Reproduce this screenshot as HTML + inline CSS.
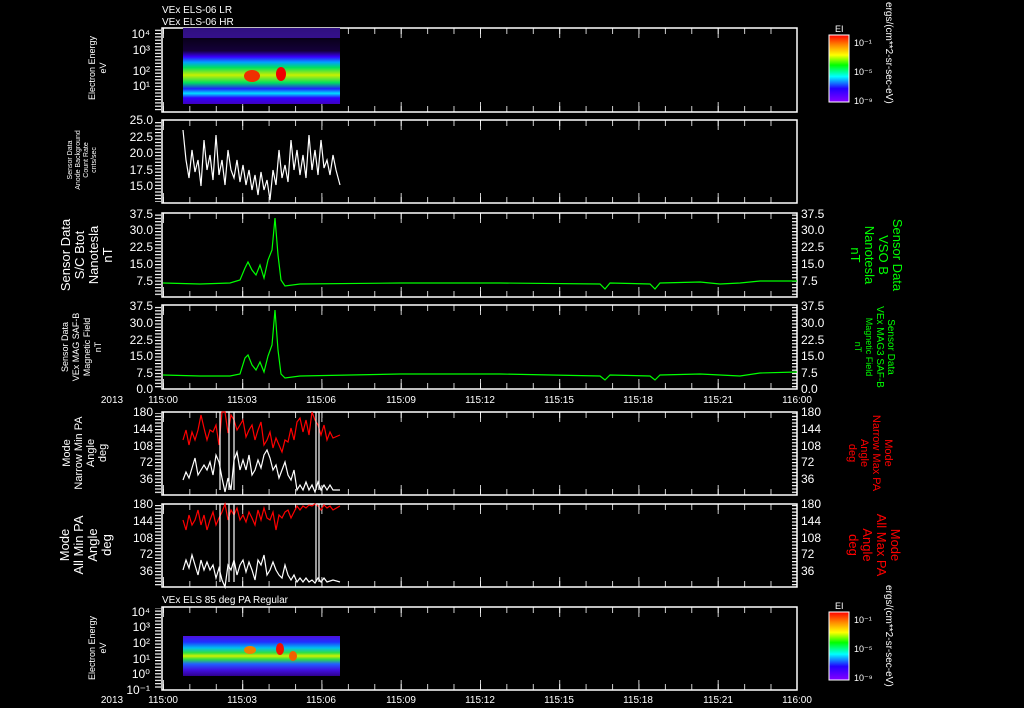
<!DOCTYPE html>
<html><head><style>
body{margin:0;background:#000;width:1024px;height:708px;overflow:hidden}
svg{display:block}
text{font-family:"Liberation Sans",sans-serif;fill:#fff}
.t{font-size:12px}
.s{font-size:9px}
</style></head><body>
<svg width="1024" height="708" viewBox="0 0 1024 708" xmlns="http://www.w3.org/2000/svg">
<defs>
<linearGradient id="sp" x1="0" y1="0" x2="0" y2="1">
<stop offset="0" stop-color="#000"/><stop offset="0.3" stop-color="#14003a"/>
<stop offset="0.38" stop-color="#3a00ff"/><stop offset="0.45" stop-color="#00a0ff"/>
<stop offset="0.52" stop-color="#00e060"/><stop offset="0.62" stop-color="#c8f000"/>
<stop offset="0.72" stop-color="#00e060"/><stop offset="0.8" stop-color="#2020ff"/>
<stop offset="0.86" stop-color="#00e0ff"/><stop offset="0.92" stop-color="#3000ff"/>
<stop offset="1" stop-color="#4000c0"/></linearGradient>
<linearGradient id="sp2" x1="0" y1="0" x2="0" y2="1">
<stop offset="0" stop-color="#5010e0"/><stop offset="0.15" stop-color="#2030ff"/>
<stop offset="0.3" stop-color="#00c0f0"/><stop offset="0.42" stop-color="#30e040"/>
<stop offset="0.5" stop-color="#d0f000"/><stop offset="0.58" stop-color="#30e040"/>
<stop offset="0.7" stop-color="#2060ff"/><stop offset="0.85" stop-color="#4010e0"/>
<stop offset="1" stop-color="#300090"/></linearGradient>
<linearGradient id="cb" x1="0" y1="0" x2="0" y2="1">
<stop offset="0" stop-color="#f00"/><stop offset="0.15" stop-color="#f80"/>
<stop offset="0.3" stop-color="#ff0"/><stop offset="0.45" stop-color="#0f0"/>
<stop offset="0.62" stop-color="#0ff"/><stop offset="0.8" stop-color="#20f"/>
<stop offset="1" stop-color="#80f"/></linearGradient>
<pattern id="hy" patternUnits="userSpaceOnUse" width="10" height="3.3"><rect x="0" y="0" width="10" height="1.2" fill="#fff"/></pattern>
<pattern id="mt" patternUnits="userSpaceOnUse" x="163" y="0" width="26.417" height="10"><rect x="-0.7" y="0" width="1.5" height="10" fill="#fff"/></pattern>
<pattern id="Mt" patternUnits="userSpaceOnUse" x="163" y="0" width="79.25" height="10"><rect x="-0.7" y="0" width="1.5" height="10" fill="#fff"/></pattern>
</defs>
<g fill="none" stroke="#fff" stroke-width="1.5">
<rect x="162" y="28" width="635" height="84"/>
<rect x="162" y="120" width="635" height="83"/>
<rect x="162" y="213" width="635" height="84"/>
<rect x="162" y="305" width="635" height="84"/>
<rect x="162" y="412" width="635" height="83"/>
<rect x="162" y="504" width="635" height="83"/>
<rect x="162" y="607" width="635" height="83"/>
</g>
<g>
<rect x="163" y="28" width="634" height="6" fill="url(#mt)"/><rect x="163" y="28" width="634" height="10" fill="url(#Mt)"/>
<rect x="163" y="106" width="634" height="6" fill="url(#mt)"/><rect x="163" y="102" width="634" height="10" fill="url(#Mt)"/>
<rect x="163" y="120" width="634" height="6" fill="url(#mt)"/><rect x="163" y="120" width="634" height="10" fill="url(#Mt)"/>
<rect x="163" y="197" width="634" height="6" fill="url(#mt)"/><rect x="163" y="193" width="634" height="10" fill="url(#Mt)"/>
<rect x="163" y="213" width="634" height="6" fill="url(#mt)"/><rect x="163" y="213" width="634" height="10" fill="url(#Mt)"/>
<rect x="163" y="291" width="634" height="6" fill="url(#mt)"/><rect x="163" y="287" width="634" height="10" fill="url(#Mt)"/>
<rect x="163" y="305" width="634" height="6" fill="url(#mt)"/><rect x="163" y="305" width="634" height="10" fill="url(#Mt)"/>
<rect x="163" y="383" width="634" height="6" fill="url(#mt)"/><rect x="163" y="379" width="634" height="10" fill="url(#Mt)"/>
<rect x="163" y="412" width="634" height="6" fill="url(#mt)"/><rect x="163" y="412" width="634" height="10" fill="url(#Mt)"/>
<rect x="163" y="489" width="634" height="6" fill="url(#mt)"/><rect x="163" y="485" width="634" height="10" fill="url(#Mt)"/>
<rect x="163" y="504" width="634" height="6" fill="url(#mt)"/><rect x="163" y="504" width="634" height="10" fill="url(#Mt)"/>
<rect x="163" y="581" width="634" height="6" fill="url(#mt)"/><rect x="163" y="577" width="634" height="10" fill="url(#Mt)"/>
<rect x="163" y="607" width="634" height="6" fill="url(#mt)"/><rect x="163" y="607" width="634" height="10" fill="url(#Mt)"/>
<rect x="163" y="684" width="634" height="6" fill="url(#mt)"/><rect x="163" y="680" width="634" height="10" fill="url(#Mt)"/>
</g>
<g fill="url(#hy)">
<rect x="155" y="29" width="6" height="82"/>
<rect x="155" y="121" width="6" height="81"/>
<rect x="155" y="214" width="6" height="82"/>
<rect x="155" y="306" width="6" height="82"/>
<rect x="155" y="413" width="6" height="81"/>
<rect x="155" y="505" width="6" height="81"/>
<rect x="155" y="608" width="6" height="81"/>
<rect x="792" y="214" width="5" height="82"/>
<rect x="792" y="306" width="5" height="82"/>
<rect x="792" y="413" width="5" height="81"/>
<rect x="792" y="505" width="5" height="81"/>
</g>
<rect x="183" y="28" width="157" height="76" fill="url(#sp)"/>
<rect x="183" y="28" width="157" height="10" fill="#6020ff" opacity="0.5"/>
<ellipse cx="252" cy="76" rx="8" ry="6" fill="#f03000"/>
<ellipse cx="281" cy="74" rx="5" ry="7" fill="#f00000"/>
<rect x="183" y="636" width="157" height="40" fill="url(#sp2)"/>
<ellipse cx="250" cy="650" rx="6" ry="4" fill="#f08000"/>
<ellipse cx="280" cy="649" rx="4" ry="6" fill="#f01000"/>
<ellipse cx="293" cy="656" rx="4" ry="5" fill="#f06000"/>
<rect x="829" y="35" width="20" height="67" fill="url(#cb)" stroke="#fff"/>
<rect x="829" y="612" width="20" height="68" fill="url(#cb)" stroke="#fff"/>
<text x="835" y="32" class="s">EI</text><text x="835" y="609" class="s">EI</text>
<text x="854" y="46" class="s">10⁻¹</text><text x="854" y="75" class="s">10⁻⁵</text><text x="854" y="104" class="s">10⁻⁹</text>
<text x="854" y="623" class="s">10⁻¹</text><text x="854" y="652" class="s">10⁻⁵</text><text x="854" y="681" class="s">10⁻⁹</text>
<text transform="translate(886,2) rotate(90)" class="s" style="font-size:10px">ergs/(cm**2-sr-sec-eV)</text>
<text transform="translate(886,585) rotate(90)" class="s" style="font-size:10px">ergs/(cm**2-sr-sec-eV)</text>
<text x="162" y="13" class="s" style="font-size:10px">VEx ELS-06 LR</text>
<text x="162" y="25" class="s" style="font-size:10px">VEx ELS-06 HR</text>
<text x="162" y="603" class="s" style="font-size:10px">VEx ELS 85 deg PA Regular</text>
<g class="t" text-anchor="end">
<text x="150" y="38">10⁴</text><text x="150" y="54">10³</text><text x="150" y="75">10²</text><text x="150" y="90">10¹</text>
<text x="153" y="124">25.0</text><text x="153" y="141">22.5</text><text x="153" y="157">20.0</text><text x="153" y="174">17.5</text><text x="153" y="190">15.0</text>
<text x="153" y="218">37.5</text><text x="153" y="234">30.0</text><text x="153" y="251">22.5</text><text x="153" y="268">15.0</text><text x="153" y="285">7.5</text>
<text x="153" y="310">37.5</text><text x="153" y="327">30.0</text><text x="153" y="344">22.5</text><text x="153" y="360">15.0</text><text x="153" y="377">7.5</text><text x="153" y="393">0.0</text>
<text x="153" y="416">180</text><text x="153" y="433">144</text><text x="153" y="450">108</text><text x="153" y="466">72</text><text x="153" y="483">36</text>
<text x="153" y="508">180</text><text x="153" y="525">144</text><text x="153" y="542">108</text><text x="153" y="558">72</text><text x="153" y="575">36</text>
<text x="150" y="616">10⁴</text><text x="150" y="631">10³</text><text x="150" y="647">10²</text><text x="150" y="663">10¹</text><text x="150" y="678">10⁰</text><text x="150" y="694">10⁻¹</text>
</g>
<g class="t">
<text x="801" y="218">37.5</text><text x="801" y="234">30.0</text><text x="801" y="251">22.5</text><text x="801" y="268">15.0</text><text x="801" y="285">7.5</text>
<text x="801" y="310">37.5</text><text x="801" y="327">30.0</text><text x="801" y="344">22.5</text><text x="801" y="360">15.0</text><text x="801" y="377">7.5</text><text x="801" y="393">0.0</text>
<text x="801" y="416">180</text><text x="801" y="433">144</text><text x="801" y="450">108</text><text x="801" y="466">72</text><text x="801" y="483">36</text>
<text x="801" y="508">180</text><text x="801" y="525">144</text><text x="801" y="542">108</text><text x="801" y="558">72</text><text x="801" y="575">36</text>
</g>
<g class="s" style="font-size:10px" text-anchor="middle">
<text x="112" y="403">2013</text><text x="163" y="403">115:00</text><text x="242" y="403">115:03</text><text x="321" y="403">115:06</text><text x="401" y="403">115:09</text><text x="480" y="403">115:12</text><text x="559" y="403">115:15</text><text x="638" y="403">115:18</text><text x="718" y="403">115:21</text><text x="797" y="403">116:00</text>
<text x="112" y="703">2013</text><text x="163" y="703">115:00</text><text x="242" y="703">115:03</text><text x="321" y="703">115:06</text><text x="401" y="703">115:09</text><text x="480" y="703">115:12</text><text x="559" y="703">115:15</text><text x="638" y="703">115:18</text><text x="718" y="703">115:21</text><text x="797" y="703">116:00</text>
</g>
<g text-anchor="middle">
<text transform="translate(95,68) rotate(-90)" class="s">Electron Energy</text><text transform="translate(106,68) rotate(-90)" class="s">eV</text>
<text transform="translate(72,160) rotate(-90)" style="font-size:7px">Sensor Data</text><text transform="translate(80,160) rotate(-90)" style="font-size:7px">Anode Background</text><text transform="translate(88,160) rotate(-90)" style="font-size:7px">Count Rate</text><text transform="translate(96,160) rotate(-90)" style="font-size:7px">cnts/sec</text>
<text transform="translate(70,255) rotate(-90)" style="font-size:13px">Sensor Data</text><text transform="translate(84,255) rotate(-90)" style="font-size:13px">S/C Btot</text><text transform="translate(98,255) rotate(-90)" style="font-size:13px">Nanotesla</text><text transform="translate(112,255) rotate(-90)" style="font-size:13px">nT</text>
<text transform="translate(68,347) rotate(-90)" class="s">Sensor Data</text><text transform="translate(79,347) rotate(-90)" class="s">VEx MAG SAF-B</text><text transform="translate(90,347) rotate(-90)" class="s">Magnetic Field</text><text transform="translate(101,347) rotate(-90)" class="s">nT</text>
<text transform="translate(70,453) rotate(-90)" style="font-size:11px">Mode</text><text transform="translate(82,453) rotate(-90)" style="font-size:11px">Narrow Min PA</text><text transform="translate(94,453) rotate(-90)" style="font-size:11px">Angle</text><text transform="translate(106,453) rotate(-90)" style="font-size:11px">deg</text>
<text transform="translate(69,545) rotate(-90)" style="font-size:13px">Mode</text><text transform="translate(83,545) rotate(-90)" style="font-size:13px">All Min PA</text><text transform="translate(97,545) rotate(-90)" style="font-size:13px">Angle</text><text transform="translate(111,545) rotate(-90)" style="font-size:13px">deg</text>
<text transform="translate(95,648) rotate(-90)" class="s">Electron Energy</text><text transform="translate(106,648) rotate(-90)" class="s">eV</text>
</g>
<g text-anchor="middle">
<text transform="translate(893,255) rotate(90)" style="font-size:13px;fill:#0f0">Sensor Data</text><text transform="translate(879,255) rotate(90)" style="font-size:13px;fill:#0f0">VSO B</text><text transform="translate(865,255) rotate(90)" style="font-size:13px;fill:#0f0">Nanotesla</text><text transform="translate(851,255) rotate(90)" style="font-size:13px;fill:#0f0">nT</text>
<text transform="translate(888,347) rotate(90)" style="font-size:10px;fill:#0f0">Sensor Data</text><text transform="translate(877,347) rotate(90)" style="font-size:10px;fill:#0f0">VEx MAG3 SAF-B</text><text transform="translate(866,347) rotate(90)" style="font-size:9px;fill:#0f0">Magnetic Field</text><text transform="translate(855,347) rotate(90)" style="font-size:9px;fill:#0f0">nT</text>
<text transform="translate(885,453) rotate(90)" style="font-size:11px;fill:#f00">Mode</text><text transform="translate(873,453) rotate(90)" style="font-size:11px;fill:#f00">Narrow Max PA</text><text transform="translate(861,453) rotate(90)" style="font-size:11px;fill:#f00">Angle</text><text transform="translate(849,453) rotate(90)" style="font-size:11px;fill:#f00">deg</text>
<text transform="translate(891,545) rotate(90)" style="font-size:13px;fill:#f00">Mode</text><text transform="translate(877,545) rotate(90)" style="font-size:13px;fill:#f00">All Max PA</text><text transform="translate(863,545) rotate(90)" style="font-size:13px;fill:#f00">Angle</text><text transform="translate(849,545) rotate(90)" style="font-size:13px;fill:#f00">deg</text>
</g>
<g fill="none" stroke-width="1.2">
<polyline stroke="#fff" points="183,130 186,160 189,178 192,150 195,172 198,160 201,186 204,140 207,170 210,155 213,180 216,135 219,175 222,160 225,185 228,150 231,170 234,178 237,160 240,182 243,165 246,185 249,170 252,190 255,175 258,195 261,172 264,190 267,180 270,200 273,170 276,185 279,150 282,178 285,165 288,182 291,140 294,170 297,150 300,175 303,155 306,178 309,135 312,170 315,150 318,175 321,140 324,168 327,160 330,175 333,155 336,170 340,185"/>
<polyline stroke="#0f0" points="163,283 200,284 230,283 240,280 245,268 248,262 252,270 256,275 260,265 264,278 268,260 272,250 275,218 278,255 281,280 285,286 300,284 400,283 500,283 600,284 605,289 610,283 650,284 655,289 660,283 700,282 720,284 740,283 760,281 797,281"/>
<polyline stroke="#0f0" points="163,375 200,376 230,376 240,374 245,358 248,355 252,365 256,370 260,362 264,372 268,356 272,345 275,310 278,350 281,374 285,378 300,376 400,374 500,374 600,376 605,380 610,375 650,376 655,380 660,375 700,374 740,376 760,373 797,372"/>
<polyline stroke="#f00" points="183,440 186,430 189,445 192,432 195,440 198,430 201,415 204,428 207,440 210,430 213,432 216,425 219,445 222,412 225,412 228,433 231,415 234,420 237,430 240,425 243,420 246,437 249,430 252,425 255,440 258,430 261,422 264,445 267,440 270,432 273,448 276,438 279,445 282,452 285,440 288,442 291,428 294,440 297,422 300,418 303,432 306,420 309,435 312,412 315,420 318,425 321,435 324,425 327,440 330,432 333,438 340,435"/>
<polyline stroke="#fff" points="183,480 186,472 189,478 192,468 195,458 198,475 201,470 204,465 207,470 210,462 213,475 216,455 219,462 222,478 225,492 228,478 231,490 234,460 237,452 240,470 243,460 246,470 249,455 252,475 255,470 258,460 261,468 264,455 267,450 270,458 273,470 276,465 279,478 282,470 285,462 288,475 291,480 294,470 297,490 300,485 303,490 306,482 309,490 312,485 315,492 318,482 321,490 324,485 327,490 330,485 333,490 340,490"/>
<path stroke="#fff" d="M220 412V490M229 412V490M234 412V490M316 412V490M319 412V490"/>
<polyline stroke="#f00" points="183,520 186,530 189,515 192,525 195,520 198,510 201,525 204,515 207,530 210,520 213,512 216,525 219,518 222,512 225,504 228,520 231,510 234,515 237,508 240,520 243,515 246,522 249,512 252,518 255,525 258,510 261,520 264,508 267,518 270,520 273,512 276,530 279,515 282,518 285,512 288,510 291,518 294,512 297,506 300,510 303,506 306,508 309,505 312,506 315,504 318,506 321,510 324,505 327,508 330,506 333,510 340,506"/>
<polyline stroke="#fff" points="183,570 186,560 189,568 192,555 195,565 198,575 201,560 204,570 207,562 210,570 213,565 216,578 219,568 222,580 225,587 228,565 231,570 234,560 237,575 240,565 243,560 246,572 249,562 252,570 255,580 258,560 261,565 264,555 267,575 270,570 273,562 276,570 279,575 282,578 285,565 288,575 291,580 294,575 297,582 300,578 303,582 306,578 309,582 312,580 315,583 318,578 321,582 324,578 327,582 333,580 340,582"/>
<path stroke="#fff" d="M220 504V582M229 504V582M234 504V582M316 504V582M319 504V582"/>
</g>
</svg>
</body></html>
